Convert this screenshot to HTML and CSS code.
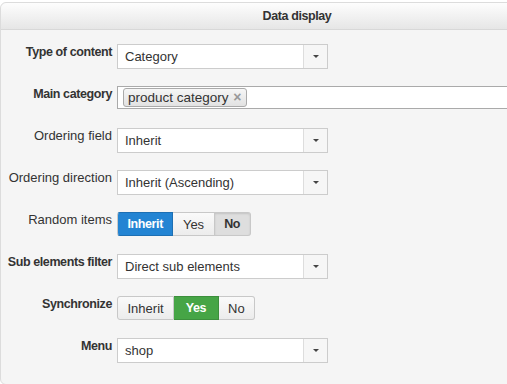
FILE: index.html
```html
<!DOCTYPE html>
<html>
  <head>
    <title>Data display</title>
    <link rel="stylesheet" href="styles.css">
  </head>

  <body>
    <section class="panel">
      <header class="panel-head">Data display</header>
      <form class="panel-body">
        <div class="row">
          <label class="label strong">Type of content</label>
          <div class="select"><span class="value">Category</span><span class="caret"></span></div>
        </div>
        <div class="row">
          <label class="label strong">Main category</label>
          <div class="tags">
            <span class="tag">product category <span class="tag-x">&times;</span></span>
          </div>
        </div>
        <div class="row">
          <label class="label">Ordering field</label>
          <div class="select"><span class="value">Inherit</span><span class="caret"></span></div>
        </div>
        <div class="row">
          <label class="label">Ordering direction</label>
          <div class="select"><span class="value">Inherit (Ascending)</span><span class="caret"></span></div>
        </div>
        <div class="row">
          <label class="label">Random items</label>
          <div class="btn-group">
            <button type="button" class="btn btn-blue">Inherit</button>
            <button type="button" class="btn">Yes</button>
            <button type="button" class="btn btn-pressed">No</button>
          </div>
        </div>
        <div class="row">
          <label class="label strong">Sub elements filter</label>
          <div class="select"><span class="value">Direct sub elements</span><span class="caret"></span></div>
        </div>
        <div class="row">
          <label class="label strong">Synchronize</label>
          <div class="btn-group">
            <button type="button" class="btn">Inherit</button>
            <button type="button" class="btn btn-green">Yes</button>
            <button type="button" class="btn">No</button>
          </div>
        </div>
        <div class="row">
          <label class="label strong">Menu</label>
          <div class="select"><span class="value">shop</span><span class="caret"></span></div>
        </div>
      </form>
    </section>
  </body>
</html>
```

FILE: styles.css
```css
html {
  overflow: hidden;
}
body {
  margin: 0;
  padding-top: 2px;
  background: white;
  font-family: "Liberation Sans", Arial, sans-serif;
  font-size: 13px;
  color: #333;
}
.panel {
  width: 594px;
  background: #f5f5f5;
  border: 1px solid #dcdcdc;
  border-radius: 6px;
  box-sizing: border-box;
}
.panel-head {
  height: 26px;
  line-height: 26px;
  text-align: center;
  font-weight: bold;
  font-size: 12.5px;
  letter-spacing: -0.4px;
  background: linear-gradient(#fdfdfd, #e6e6e6);
  border-bottom: 1px solid #d8d8d8;
  border-radius: 6px 6px 0 0;
}
.panel-body {
  padding: 14px 0 4px 0;
  margin: 0;
}
.row {
  display: flex;
  align-items: flex-start;
  height: 42px;
  gap: 5px;
}
.label {
  width: 111px;
  flex: none;
  text-align: right;
  white-space: nowrap;
  line-height: 16px;
}
.label.strong {
  font-weight: bold;
  font-size: 12.5px;
  letter-spacing: -0.4px;
}
.select {
  display: flex;
  width: 211px;
  height: 25px;
  box-sizing: border-box;
  background: white;
  border: 1px solid #ccc;
}
.select .value {
  flex: 1;
  line-height: 23px;
  padding-left: 7px;
}
.caret {
  width: 23px;
  border-left: 1px solid #ddd;
  background: #f6f6f6;
  position: relative;
}
.caret::after {
  content: "";
  position: absolute;
  left: 9px;
  top: 10px;
  border-left: 3px solid transparent;
  border-right: 3px solid transparent;
  border-top: 3px solid #444;
}
.tags {
  width: 470px;
  height: 23px;
  box-sizing: border-box;
  background: white;
  border: 1px solid #aaa;
  padding: 1px 5px;
}
.tag {
  display: inline-block;
  height: 17px;
  line-height: 17px;
  padding: 0 4px;
  font-size: 13.5px;
  border: 1px solid #aaa;
  border-radius: 3px;
  background: linear-gradient(#f6f6f6, #e2e2e2);
}
.tag-x {
  color: #999;
  font-weight: bold;
  font-size: 14px;
  margin-left: 1px;
}
.btn-group {
  display: flex;
  height: 24px;
}
.btn {
  font-family: inherit;
  font-size: 13px;
  color: #333;
  margin: 0;
  padding: 0 9.5px;
  background: linear-gradient(#fafafa, #ececec);
  border: 1px solid #c8c8c8;
  border-left: 0;
  cursor: pointer;
}
.btn:first-child {
  border-left: 1px solid #c8c8c8;
  border-radius: 3px 0 0 3px;
}
.btn:last-child {
  border-radius: 0 3px 3px 0;
}
.btn-blue {
  background: #2384d3;
  border-color: #1d6fb3;
  color: white;
  font-weight: bold;
  font-size: 12.5px;
  letter-spacing: -0.4px;
  padding: 0 9.5px;
}
.btn-green {
  background: #46a546;
  border-color: #3c8f3c;
  color: white;
  font-weight: bold;
  font-size: 12.5px;
  letter-spacing: -0.4px;
  padding: 0 11.5px;
}
.btn-pressed {
  background: #dedede;
  font-weight: bold;
  font-size: 12.5px;
  letter-spacing: -0.4px;
  box-shadow: inset 0 1px 2px rgba(0, 0, 0, 0.12);
}
```
